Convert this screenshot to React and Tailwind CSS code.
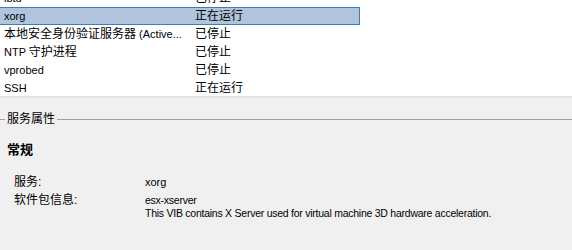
const rows = [
  { name: "lbtd", status: "已停止" },
  { name: "xorg", status: "正在运行", selected: true },
  { name: <><span className="text-[12px]">本地安全身份验证服务器</span> (Active...</>, status: "已停止" },
  { name: <>NTP <span className="text-[12px]">守护进程</span></>, status: "已停止" },
  { name: "vprobed", status: "已停止" },
  { name: "SSH", status: "正在运行" },
];

const font = { fontFamily: "'Liberation Sans', Arial, 'Noto Sans CJK SC', sans-serif" };

export default function App() {
  return (
    <div
      className="w-[572px] h-[250px] overflow-hidden bg-[#f0f0f0] text-[11px] text-black flex flex-col"
      style={font}
    >
      <div className="h-[96px] bg-white overflow-hidden shrink-0">
        <div className="-mt-[11px]">
          {rows.map((r, i) => (
            <div
              key={i}
              className={
                r.selected
                  ? "flex items-center h-[18px] w-[361px] -ml-px border border-[#3c7fb1] bg-[#b0c4de]"
                  : "flex items-center h-[18px] w-[361px] -ml-px border border-transparent"
              }
            >
              <div className="w-[191px] pl-[4px] whitespace-nowrap">{r.name}</div>
              <div className="pl-[4px] text-[12px]">{r.status}</div>
            </div>
          ))}
        </div>
      </div>
      <div className="h-[2px] bg-[#e3e3e3] shrink-0" />

      <div className="flex items-center mt-[14px] h-[14px]">
        <div className="w-[5px] border-t border-[#a0a0a0]" />
        <span className="px-[2px] text-[12px]">服务属性</span>
        <div className="flex-1 border-t border-[#a0a0a0]" />
      </div>

      <div className="mt-[14px] pl-[7px] text-[13px] font-bold">常规</div>

      <div className="mt-[16px] grid grid-cols-[131px_1fr] gap-y-[5px] pl-[14px] leading-[13px]">
        <div className="text-[12px]">服务:</div>
        <div>xorg</div>
        <div className="text-[12px]">软件包信息:</div>
        <div className="whitespace-nowrap text-[10.5px] tracking-[-0.25px]">
          <div>esx-xserver</div>
          <div>This VIB contains X Server used for virtual machine 3D hardware acceleration.</div>
        </div>
      </div>
    </div>
  );
}
